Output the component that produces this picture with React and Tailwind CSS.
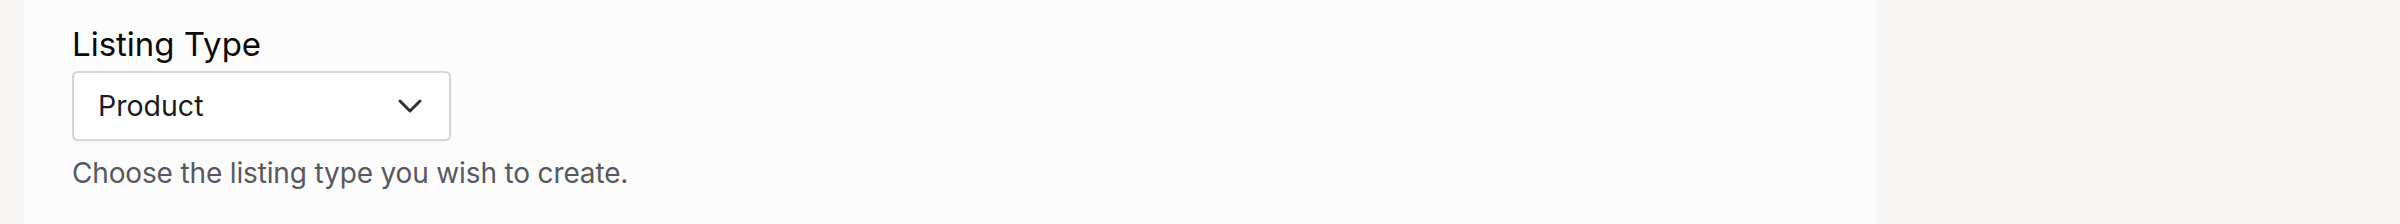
import React from 'react';

function ChevronDown() {
  return (
    <svg width="24" height="14" viewBox="0 0 24 14" fill="none" stroke="#2f3138" strokeWidth="3" strokeLinecap="round" strokeLinejoin="round">
      <path d="M2 2 L12 12 L22 2" />
    </svg>
  );
}

export default function App() {
  return (
    <div className="flex h-[224px] w-full bg-[#f8f7f5] font-['Inter',sans-serif]">
      <div className="w-[24px] shrink-0" />
      {/* Form panel */}
      <div className="w-[1852px] shrink-0 bg-[#fcfcfc] pl-[48px] pt-[24px]">
        <label className="block text-[33px] leading-[40px] text-[#0a0a0a]">Listing Type</label>
        <button className="mt-[7px] flex h-[70px] w-[379px] items-center justify-between rounded-[6px] border-2 border-[#d4d5da] bg-white pl-[24px] pr-[27px] shadow-[0_1px_2px_rgba(0,0,0,0.06)]">
          <span className="text-[28.5px] leading-[36px] text-[#1c1c20]">Product</span>
          <ChevronDown />
        </button>
        <p className="mt-[12px] text-[28px] leading-[40px] tracking-[-0.15px] text-[#58585f]">Choose the listing type you wish to create.</p>
      </div>
      <div className="flex-1" />
    </div>
  );
}
